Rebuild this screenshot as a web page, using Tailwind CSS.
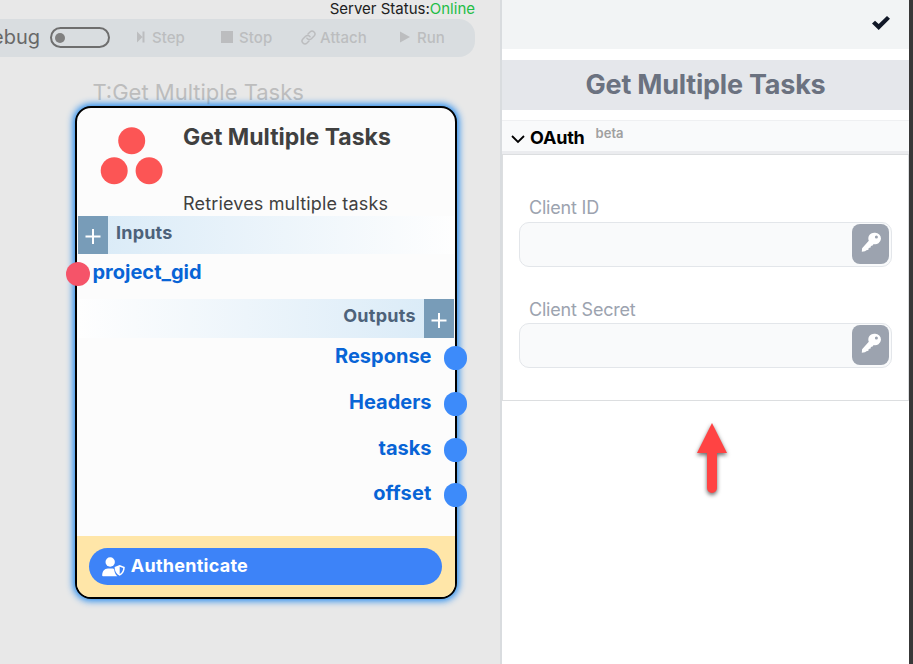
<!DOCTYPE html>
<html lang="en">
<head>
<meta charset="utf-8">
<title>Get Multiple Tasks</title>
<script src="https://cdn.jsdelivr.net/npm/@tailwindcss/browser@4"></script>
</head>
<body class="flex h-[664px] w-[913px] overflow-hidden bg-white font-['Inter',sans-serif]">
<main class="relative h-full w-[500px] shrink-0 overflow-hidden bg-[#e8e8e8]">
  <div class="flex h-[19px] justify-end pr-[25px] text-[15px] leading-[18px] whitespace-nowrap text-[#202020]">Server Status:<span class="text-[#1fbd46]">Online</span></div>
  <div class="flex h-[38px] w-[475px] items-center rounded-r-[16px] bg-[#d9dde0] pb-[2px] text-[15px] font-medium whitespace-nowrap text-[#bcbdbf]">
    <div class="flex w-[40px] shrink-0 justify-end text-[20px] font-normal text-[#686868]">Debug</div>
    <div class="ml-[10px] flex h-[21px] w-[60px] shrink-0 items-center rounded-full border-2 border-[#6e6e6e] pl-[3px]"><span class="mt-px size-[10px] rounded-full bg-[#808080]"></span></div>
    <div class="ml-[27px] flex w-[84px] shrink-0 items-center"><svg class="h-[12px] w-[8px]" viewBox="0 0 8 12" fill="currentColor"><path d="M0 .5 5.5 6 0 11.500zM5.500 .5h2v11h-2z"/></svg><span class="mt-[2px] ml-[7px]">Step</span></div>
    <div class="flex w-[80px] shrink-0 items-center"><span class="size-[12px] bg-current"></span><span class="mt-[2px] ml-[6px] tracking-[0.100px]">Stop</span></div>
    <div class="flex w-[99px] shrink-0 items-center"><svg class="size-[15px]" viewBox="0 0 15 15" fill="none" stroke="currentColor" stroke-width="1.500" stroke-linecap="round"><path d="m7 4 2-2a2.900 2.900 0 0 1 4.100 4.100L10.400 8.800a2.900 2.900 0 0 1-4.500-.6"/><path d="m8 11-2 2a2.900 2.900 0 0 1-4.100-4.100l2.700-2.700a2.900 2.900 0 0 1 4.500.6"/></svg><span class="mt-[2px] ml-[4px] tracking-[0.100px]">Attach</span></div>
    <div class="flex items-center"><svg class="h-[12px] w-[10px]" viewBox="0 0 10 12" fill="currentColor"><path d="M0 .5 10 6 0 11.500z"/></svg><span class="mt-[2px] ml-[7px]">Run</span></div>
  </div>
  <div class="pt-[21px] pl-[92.500px] text-[22px] leading-[28px] whitespace-nowrap text-[#bdbdbd]">T:Get Multiple Tasks</div>

  <section class="absolute top-[106px] left-[75px] flex h-[493px] w-[382px] flex-col rounded-[16px] border-2 border-black bg-[#fcfcfc] shadow-[0_0_7px_2px_#2189ee]">
    <header class="flex h-[108px] shrink-0">
      <svg class="mt-[18px] ml-[23px] h-[60px] w-[64px] shrink-0" viewBox="0 0 64 60" fill="#fc5555"><circle cx="31.700" cy="14.700" r="13.500"/><circle cx="14.200" cy="44.800" r="13.500"/><circle cx="49.100" cy="44.800" r="13.500"/></svg>
      <div class="ml-[19px] whitespace-nowrap text-[#404040]">
        <h1 class="mt-[15px] text-[23px] leading-[28px] font-bold">Get Multiple Tasks</h1>
        <p class="mt-[41px] text-[18px] leading-[24px] tracking-[0.16px]">Retrieves multiple tasks</p>
      </div>
    </header>
    <div class="mx-px flex h-[38px] shrink-0 bg-gradient-to-r from-[#d8eaf7] to-[#fefefe]">
      <div class="flex w-[30px] items-center justify-center bg-[#789cb8]"><svg class="mt-[3px] size-[16px]" viewBox="0 0 16 16" stroke="#fff" stroke-width="2"><path d="M8 0v15M.5 7.500h15"/></svg></div>
      <h2 class="ml-[8px] text-[18px] leading-[34px] font-bold tracking-[0.200px] text-[#4d627a]">Inputs</h2>
    </div>
    <div class="relative h-[45px] shrink-0 pl-[15.500px] text-[20px] leading-[36px] font-bold text-[#0864d6]"><span class="absolute top-[8px] -left-[11px] size-[24px] rounded-full bg-[#f55469]"></span>project_gid</div>
    <div class="mx-px flex h-[39px] shrink-0 justify-end bg-gradient-to-l from-[#d8eaf7] to-[#fefefe]">
      <h2 class="mr-[8px] text-[18px] leading-[33px] font-bold tracking-[0.300px] text-[#4d627a]">Outputs</h2>
      <div class="flex w-[30px] items-center justify-center bg-[#789cb8]"><svg class="mt-[4px] size-[16px]" viewBox="0 0 16 16" stroke="#fff" stroke-width="2"><path d="M8 0v15M.5 7.500h15"/></svg></div>
    </div>
    <ul class="h-[198px] shrink-0 text-right text-[20px] leading-[36px] font-bold text-[#0864d6]">
      <li class="relative h-[46px] pr-[23.500px]">Response<span class="absolute top-[8px] -right-[12px] size-[23.500px] rounded-full bg-[#3d8bfa]"></span></li>
      <li class="relative h-[46px] pr-[23.500px]">Headers<span class="absolute top-[8px] -right-[12px] size-[23.500px] rounded-full bg-[#3d8bfa]"></span></li>
      <li class="relative h-[45px] pr-[23.500px]">tasks<span class="absolute top-[8px] -right-[12px] size-[23.500px] rounded-full bg-[#3d8bfa]"></span></li>
      <li class="relative h-[46px] pr-[23.500px]"><span class="tracking-[0.150px]">offset</span><span class="absolute top-[8px] -right-[12px] size-[23.500px] rounded-full bg-[#3d8bfa]"></span></li>
    </ul>
    <footer class="flex-1 rounded-b-[14px] bg-[#ffe6a8] px-[12.300px] pt-[12px]">
      <button class="flex h-[36.500px] w-[353px] items-center rounded-full bg-[#3d83f8] pb-px pl-[12.500px] text-[18px] font-bold text-white">
        <svg class="mt-[2px] h-[20px] w-[23px]" viewBox="0 0 23 20" fill="currentColor"><circle cx="8.200" cy="5" r="4.700"/><path d="M6 11.500h5.200l1 1c.2 3 1.300 5 3.200 6.800H1a.8.8 0 0 1-.8-.8c0-4 2-7 5.800-7z"/><path fill-rule="evenodd" d="m17.700 8 5.100 2c0 4-1.600 7.200-5.100 8.800-3.500-1.600-5.100-4.800-5.100-8.800zm0 1.700v7.400c2.200-1.200 3.300-3.200 3.500-6z"/></svg>
        <span class="ml-[6px] tracking-[0.250px]">Authenticate</span>
      </button>
    </footer>
  </section>
</main>
<aside class="flex h-full w-[409px] shrink-0 flex-col border-l-2 border-[#d9dcdf] bg-white">
  <div class="flex h-[49px] shrink-0 justify-end bg-[#f2f4f5] pt-[16px] pr-[19px]"><svg class="h-[14px] w-[18px]" viewBox="0 0 18 14" fill="#111827"><path d="M0 7.500 3 4.700 6.700 8 15 0l3 2.800L6.700 14z"/></svg></div>
  <h1 class="mt-[11px] h-[50px] shrink-0 bg-[#e5e7eb] text-center text-[27px] leading-[49px] font-bold tracking-[-0.220px] text-[#6b7280]">Get Multiple Tasks</h1>
  <div class="mt-[10px] flex h-[34px] shrink-0 border-t border-b-3 border-t-[#eff0f2] border-b-[#ebecef] bg-[#f9fafb] pl-[9px]">
    <svg class="mt-[14px] h-[9px] w-[14px]" viewBox="0 0 14 9" fill="none" stroke="#000" stroke-width="1.800"><path d="m1 1 6 6 6-6"/></svg>
    <span class="ml-[5px] text-[18px] leading-[34px] font-bold tracking-[-0.200px] text-black">OAuth</span>
    <span class="ml-[11px] text-[13px] leading-[25px] font-semibold text-[#a0a0a0]">beta</span>
  </div>
  <div class="h-[247px] shrink-0 border border-[#dcdee0] px-[16px] pt-[42px] text-[18px] leading-[22px] text-[#9ca3af]">
    <div class="h-[102px]">
      <label class="block h-[25px] pl-[10px] tracking-[-0.200px]">Client ID</label>
      <div class="flex h-[45px] w-[373px] justify-end rounded-[10px] border border-[#e3e6ea] bg-[#f9fafb] pt-px pr-[2px]">
        <button class="flex h-[40px] w-[37px] justify-center rounded-[8px] bg-[#9ca3af] pt-[8px]"><svg class="size-[20px]" viewBox="0 0 20 20" fill="#fff"><path fill-rule="evenodd" d="M13.700.7a5.800 5.800 0 1 1-1 11.400l-1.100 1.500-1.700.3-.3 1.700-1.900.4-.3 1.700-2 .5L4 19.300.8 19.700l.3-3.500 6.700-7.400A5.800 5.800 0 0 1 13.700.7zm1.700 2.700a1.500 1.500 0 1 0 0 3 1.500 1.500 0 0 0 0-3z"/></svg></button>
      </div>
    </div>
    <div>
      <label class="block h-[24px] pl-[10px] tracking-[-0.200px]">Client Secret</label>
      <div class="flex h-[45px] w-[373px] justify-end rounded-[10px] border border-[#e3e6ea] bg-[#f9fafb] pt-px pr-[2px]">
        <button class="flex h-[40px] w-[37px] justify-center rounded-[8px] bg-[#9ca3af] pt-[8px]"><svg class="size-[20px]" viewBox="0 0 20 20" fill="#fff"><path fill-rule="evenodd" d="M13.700.7a5.800 5.800 0 1 1-1 11.400l-1.100 1.500-1.700.3-.3 1.700-1.900.4-.3 1.700-2 .5L4 19.300.8 19.700l.3-3.500 6.700-7.400A5.800 5.800 0 0 1 13.700.7zm1.700 2.700a1.500 1.500 0 1 0 0 3 1.500 1.500 0 0 0 0-3z"/></svg></button>
      </div>
    </div>
  </div>
  <svg class="mt-[22px] ml-[195px] h-[72px] w-[30px] shrink-0 overflow-visible drop-shadow-[0_2px_2px_rgba(0,0,0,0.6)]" viewBox="0 0 30 72" fill="#ff4343"><path d="M15 0 30 30H20v35a5 5 0 0 1-10 0V30H0z"/></svg>
</aside>
<div class="h-full w-[4px] shrink-0 bg-[#383838]"></div>
</body>
</html>
